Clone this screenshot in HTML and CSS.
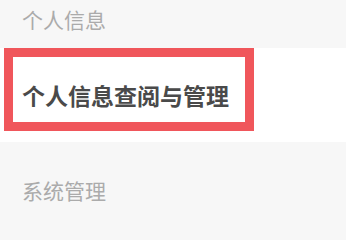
FILE: index.html
```html
<!DOCTYPE html>
<html lang="zh-CN">
<head>
<meta charset="utf-8">
<link rel="stylesheet" href="styles.css">
</head>
<body>
<div class="page">
  <div class="section-title first">个人信息</div>
  <div class="row">
    <div class="highlight">
      <span class="row-label">个人信息查阅与管理</span>
    </div>
  </div>
  <div class="section-title second">系统管理</div>
</div>
</body>
</html>
```
FILE: styles.css
```css
html, body {
  margin: 0;
  padding: 0;
  background: #f7f7f7;
}
.page {
  width: 346px;
  height: 219px;
  overflow: hidden;
  font-family: "Noto Sans CJK SC", "Noto Sans", sans-serif;
}
.section-title {
  display: flex;
  align-items: center;
  padding-left: 22px;
  font-size: 21px;
  color: #ababab;
  line-height: 1;
}
.section-title.first {
  height: 38px;
  margin-bottom: 10px;
}
.section-title.second {
  padding-top: 38px;
  height: 20px;
}
.row {
  background: #ffffff;
  height: 94px;
  padding-left: 4px;
  box-sizing: border-box;
}
.highlight {
  width: 250px;
  height: 83px;
  box-sizing: border-box;
  border: 9px solid #f0565b;
  display: flex;
  align-items: center;
  padding-left: 9px;
  padding-top: 12px;
}
.row-label {
  font-size: 23px;
  font-weight: 700;
  color: #4a4a4a;
  line-height: 1;
}
```
